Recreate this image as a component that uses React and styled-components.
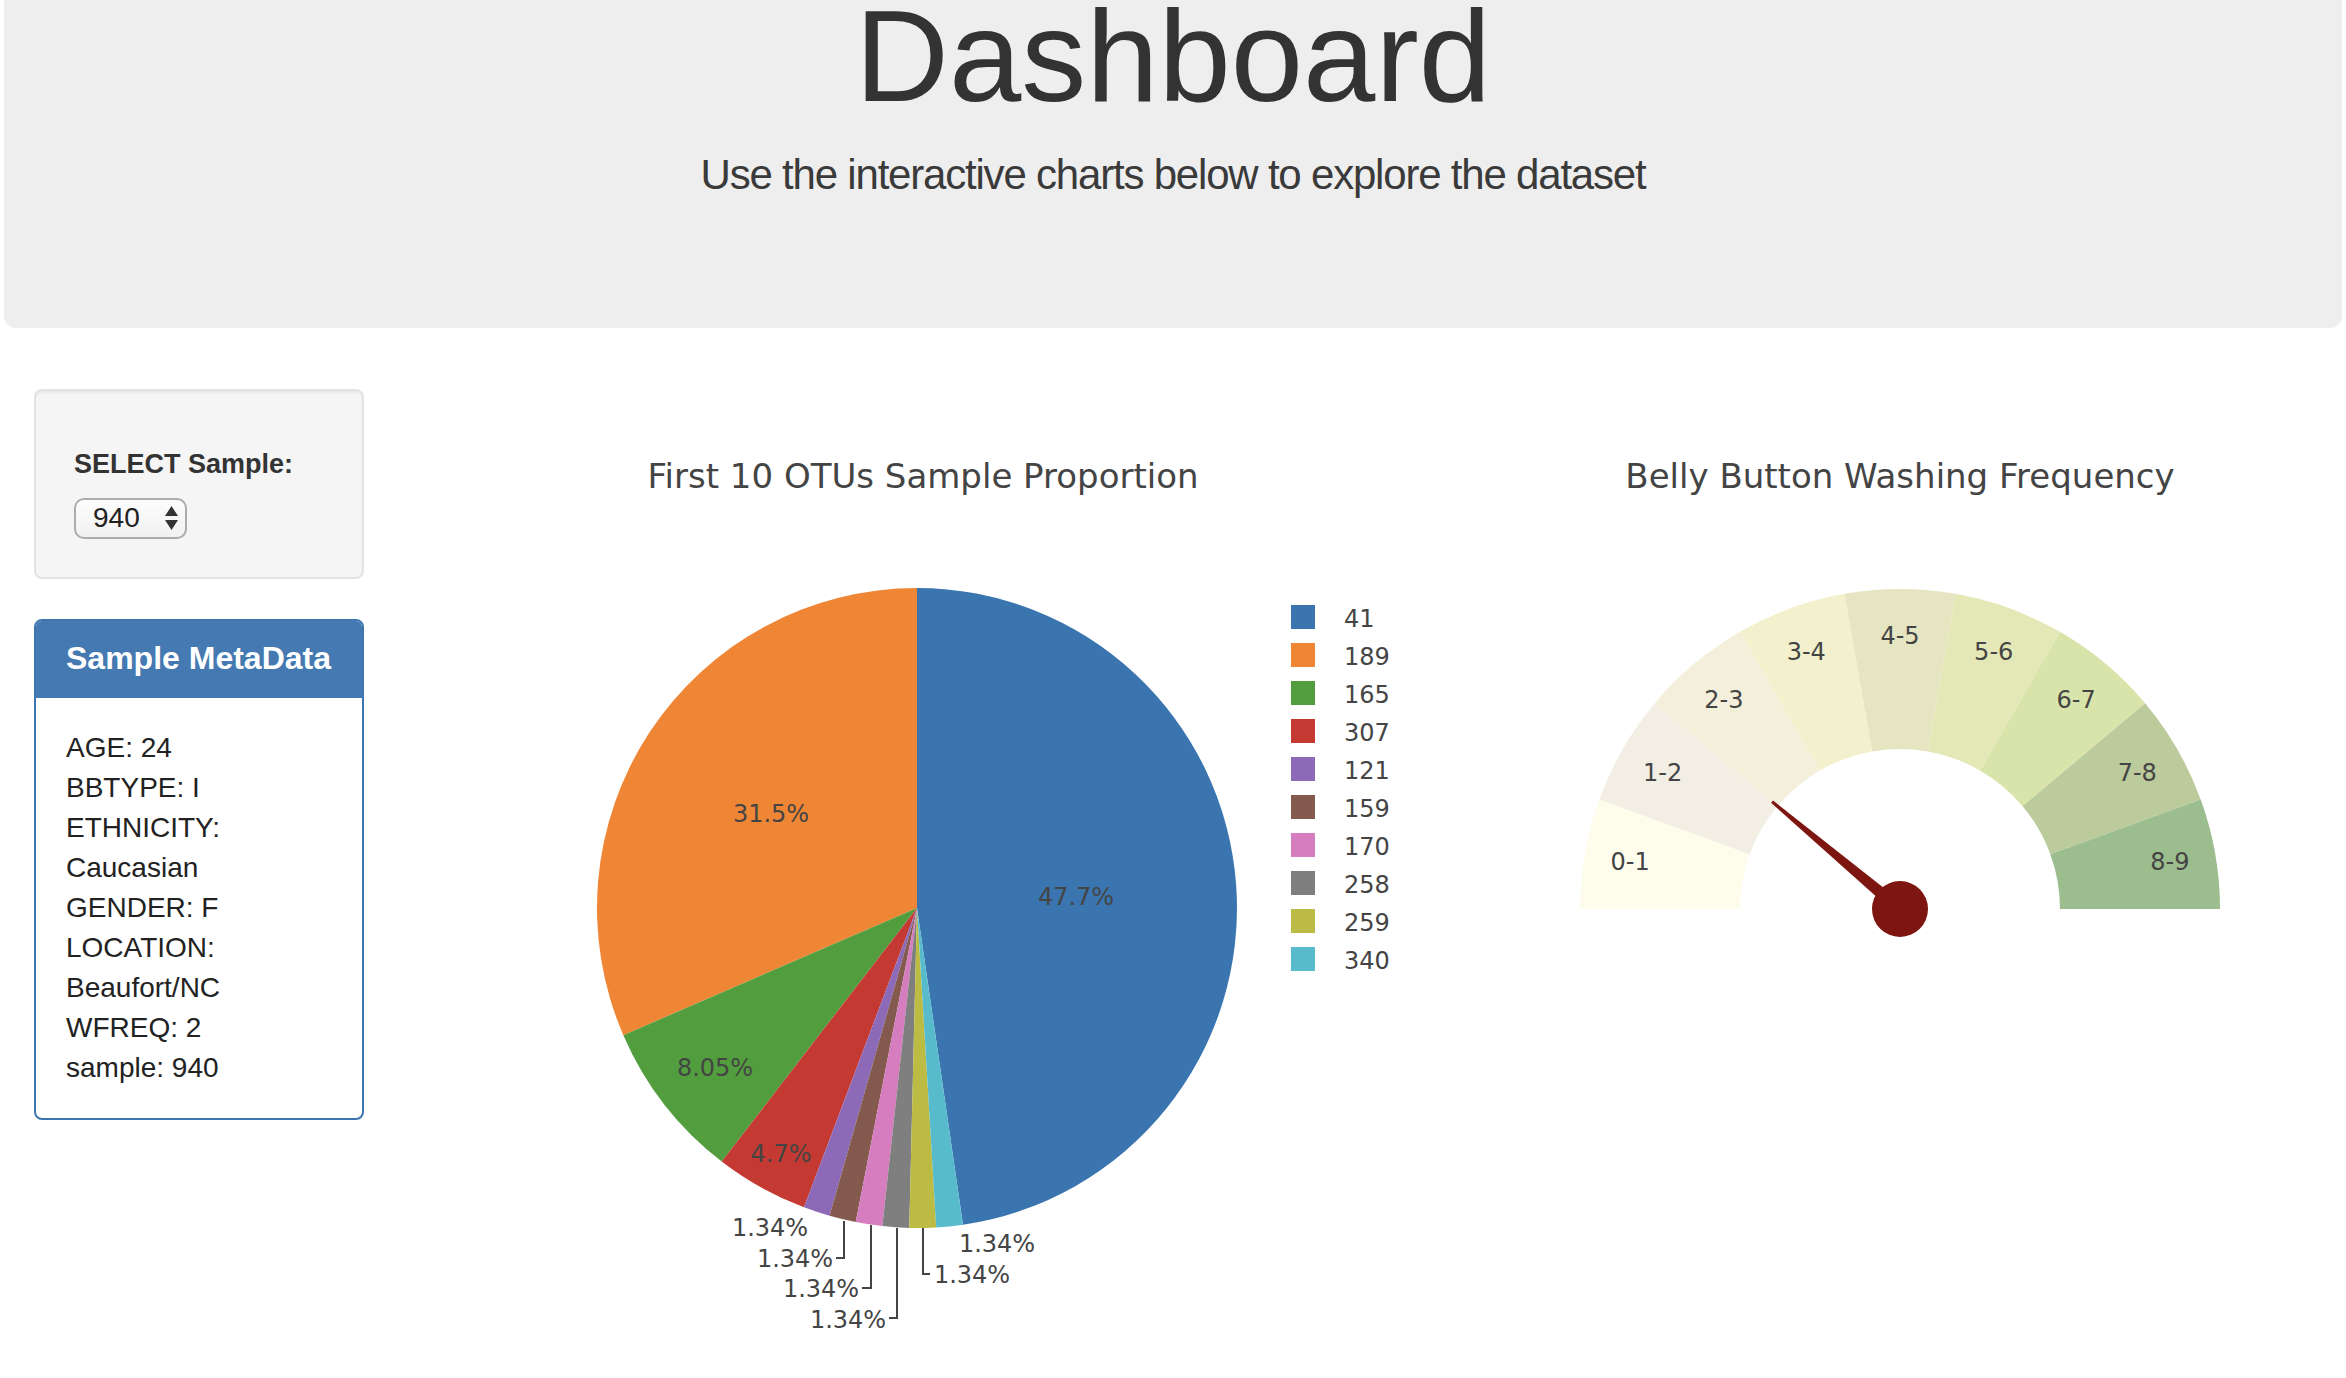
import React from "react";
import styled, { createGlobalStyle } from "styled-components";

const GlobalStyle = createGlobalStyle`
  html, body {
    margin: 0;
    padding: 0;
    background: #fff;
  }
  body {
    font-family: "Liberation Sans", Arial, sans-serif;
    color: #333;
  }
`;

const Page = styled.div`
  width: 2346px;
`;

const Jumbotron = styled.header`
  margin: 0 4px;
  padding: 0 0 123px;
  background: #eee;
  border-radius: 0 0 12px 12px;
  text-align: center;
  color: #333;
`;

const Title = styled.h1`
  margin: 0;
  font-size: 130px;
  line-height: 113px;
  font-weight: 500;
  color: #333;
`;

const Lead = styled.p`
  margin: 33px 0 0;
  font-size: 42px;
  line-height: 58.8px;
  letter-spacing: -1.2px;
  font-weight: 300;
  color: #3a3a3a;
`;

const Row = styled.main`
  display: flex;
  align-items: flex-start;
  margin-top: 61px;
  padding-left: 34px;
`;

const Sidebar = styled.aside`
  flex: none;
  width: 330px;
  margin-right: 27px;
  display: flex;
  flex-direction: column;
  gap: 40px;
`;

const Well = styled.div`
  padding: 38px;
  background: #f5f5f5;
  border: 2px solid #e3e3e3;
  border-radius: 8px;
  box-shadow: inset 0 2px 2px rgba(0, 0, 0, 0.05);
`;

const SelectLabel = styled.div`
  margin-top: 15px;
  font-size: 27px;
  line-height: 40px;
  font-weight: bold;
  color: #333;
`;

const SelectBox = styled.div`
  box-sizing: border-box;
  margin-top: 14px;
  width: 113px;
  height: 41px;
  display: flex;
  align-items: center;
  justify-content: space-between;
  padding: 0 7px 0 17px;
  border: 2px solid #acacac;
  border-radius: 10px;
  background: linear-gradient(#fdfdfd, #f1f1f1);
  font-size: 28px;
  color: #222;
`;

const Panel = styled.section`
  border: 2px solid #3e76b0;
  border-radius: 8px;
  overflow: hidden;
  background: #fff;
`;

const PanelHeading = styled.div`
  padding: 20px 30px;
  background: #4479b1;
  border-bottom: 2px solid #4479b1;
`;

const PanelTitle = styled.h3`
  margin: 0;
  font-size: 32px;
  line-height: 1.1;
  font-weight: bold;
  color: #fff;
`;

const PanelBody = styled.div`
  padding: 30px;
`;

const MetaLine = styled.div`
  font-size: 28px;
  line-height: 40px;
  color: #222;
`;

const ChartCol = styled.div`
  flex: none;
  width: ${(p) => p.$width}px;
`;

const ChartSvg = styled.svg`
  display: block;
  font-family: "DejaVu Sans", Verdana, sans-serif;
`;

const ChartTitle = styled.text`
  font-size: 34px;
  fill: #444;
  text-anchor: middle;
`;

const ChartLabel = styled.text`
  font-size: 24px;
  fill: #444;
  text-anchor: ${(p) => p.$anchor || "middle"};
`;

const Leader = styled.polyline`
  fill: none;
  stroke: #444;
  stroke-width: 2;
`;

const otus = [
  { id: "41", pct: 47.7, color: "#3a75af" },
  { id: "189", pct: 31.5, color: "#ef8636" },
  { id: "165", pct: 8.05, color: "#529e3e" },
  { id: "307", pct: 4.7, color: "#c43932" },
  { id: "121", pct: 1.34, color: "#8d6ab8" },
  { id: "159", pct: 1.34, color: "#845a4e" },
  { id: "170", pct: 1.34, color: "#d57dbe" },
  { id: "258", pct: 1.34, color: "#7f7f7f" },
  { id: "259", pct: 1.34, color: "#bcbc45" },
  { id: "340", pct: 1.34, color: "#58bbcc" },
];

// label spots measured off the plotly output
const pieLabels = [
  { text: "47.7%", x: 685, y: 516 },
  { text: "31.5%", x: 380, y: 433 },
  { text: "8.05%", x: 324, y: 687 },
  { text: "4.7%", x: 390, y: 773 },
  { text: "1.34%", x: 379, y: 847 },
  { text: "1.34%", x: 404, y: 878, line: "445,869 453,869 453,832" },
  { text: "1.34%", x: 430, y: 908, line: "471,899 480,899 480,836" },
  { text: "1.34%", x: 457, y: 939, line: "498,929 506,929 506,839" },
  { text: "1.34%", x: 581, y: 894, line: "539,885 532,885 532,839" },
  { text: "1.34%", x: 606, y: 863 },
];

const gaugeSteps = [
  { text: "0-1", color: "#fefdec" },
  { text: "1-2", color: "#f2eee3" },
  { text: "2-3", color: "#f3efda" },
  { text: "3-4", color: "#f3f0cd" },
  { text: "4-5", color: "#e6e5c2" },
  { text: "5-6", color: "#e4e8b6" },
  { text: "6-7", color: "#d9e4ab" },
  { text: "7-8", color: "#bccb9b" },
  { text: "8-9", color: "#9cbd8e" },
];

const metadata = [
  "AGE: 24",
  "BBTYPE: I",
  "ETHNICITY: Caucasian",
  "GENDER: F",
  "LOCATION: Beaufort/NC",
  "WFREQ: 2",
  "sample: 940",
];

// angles in degrees, clockwise from 12 o'clock
const pt = (cx, cy, r, deg) => {
  const a = (deg * Math.PI) / 180;
  return [cx + r * Math.sin(a), cy - r * Math.cos(a)];
};

function wedge(cx, cy, r0, r1, a0, a1) {
  const large = a1 - a0 > 180 ? 1 : 0;
  const [x1, y1] = pt(cx, cy, r1, a0);
  const [x2, y2] = pt(cx, cy, r1, a1);
  if (!r0) {
    return `M${cx},${cy} L${x1},${y1} A${r1},${r1} 0 ${large} 1 ${x2},${y2} Z`;
  }
  const [x3, y3] = pt(cx, cy, r0, a1);
  const [x4, y4] = pt(cx, cy, r0, a0);
  return `M${x1},${y1} A${r1},${r1} 0 ${large} 1 ${x2},${y2} L${x3},${y3} A${r0},${r0} 0 ${large} 0 ${x4},${y4} Z`;
}

function PieChart() {
  const cx = 526;
  const cy = 519;
  const total = otus.reduce((s, o) => s + o.pct, 0);
  let a = (360 * otus[0].pct) / total;
  const slices = otus.map((o) => {
    const a1 = a;
    const a0 = a - (360 * o.pct) / total;
    a = a0;
    return { ...o, d: wedge(cx, cy, 0, 320, a0, a1) };
  });

  return (
    <ChartSvg width="1050" height="960" viewBox="0 0 1050 960">
      <ChartTitle x="532" y="99">First 10 OTUs Sample Proportion</ChartTitle>
      {slices.map((s) => (
        <path key={s.id} d={s.d} fill={s.color} />
      ))}
      {pieLabels.map((l, i) => (
        <g key={i}>
          {l.line && <Leader points={l.line} />}
          <ChartLabel x={l.x} y={l.y}>
            {l.text}
          </ChartLabel>
        </g>
      ))}
      {otus.map((o, i) => (
        <g key={o.id}>
          <rect x="900" y={216 + i * 38} width="24" height="24" fill={o.color} />
          <ChartLabel $anchor="start" x="953" y={238 + i * 38}>
            {o.id}
          </ChartLabel>
        </g>
      ))}
    </ChartSvg>
  );
}

function Gauge({ level }) {
  const cx = 459;
  const cy = 520;
  const deg = 270 + level * 20;
  const [tx, ty] = pt(cx, cy, 167, deg);
  const [bx, by] = [Math.cos((deg * Math.PI) / 180), Math.sin((deg * Math.PI) / 180)];
  const needle = [
    [cx + bx * 6.5, cy + by * 6.5],
    [tx + bx * 1.5, ty + by * 1.5],
    [tx - bx * 1.5, ty - by * 1.5],
    [cx - bx * 6.5, cy - by * 6.5],
  ]
    .map((p) => p.join(","))
    .join(" ");

  return (
    <ChartSvg width="904" height="960" viewBox="0 0 904 960">
      <ChartTitle x="459" y="99">Belly Button Washing Frequency</ChartTitle>
      {gaugeSteps.map((s, i) => {
        const a0 = 270 + i * 20;
        const [lx, ly] = pt(cx, cy, 274, a0 + 10);
        return (
          <g key={s.text}>
            <path d={wedge(cx, cy, 160, 320, a0, a0 + 20)} fill={s.color} />
            <ChartLabel x={lx} y={ly + 8.5}>
              {s.text}
            </ChartLabel>
          </g>
        );
      })}
      <polygon points={needle} fill="#7d1610" />
      <circle cx={cx} cy={cy} r="28" fill="#7d1610" />
    </ChartSvg>
  );
}

function App() {
  return (
    <Page>
      <GlobalStyle />
      <Jumbotron>
        <Title>Dashboard</Title>
        <Lead>Use the interactive charts below to explore the dataset</Lead>
      </Jumbotron>
      <Row>
        <Sidebar>
          <Well>
            <SelectLabel>SELECT Sample:</SelectLabel>
            <SelectBox>
              <span>940</span>
              <svg width="13" height="24" viewBox="0 0 13 24">
                <path d="M0 10 L6.5 0 L13 10 Z M0 14 L13 14 L6.5 24 Z" fill="#333" />
              </svg>
            </SelectBox>
          </Well>
          <Panel>
            <PanelHeading>
              <PanelTitle>Sample MetaData</PanelTitle>
            </PanelHeading>
            <PanelBody>
              {metadata.map((m) => (
                <MetaLine key={m}>{m}</MetaLine>
              ))}
            </PanelBody>
          </Panel>
        </Sidebar>
        <ChartCol $width={1050}>
          <PieChart />
        </ChartCol>
        <ChartCol $width={904}>
          <Gauge level={2} />
        </ChartCol>
      </Row>
    </Page>
  );
}

export default App;
